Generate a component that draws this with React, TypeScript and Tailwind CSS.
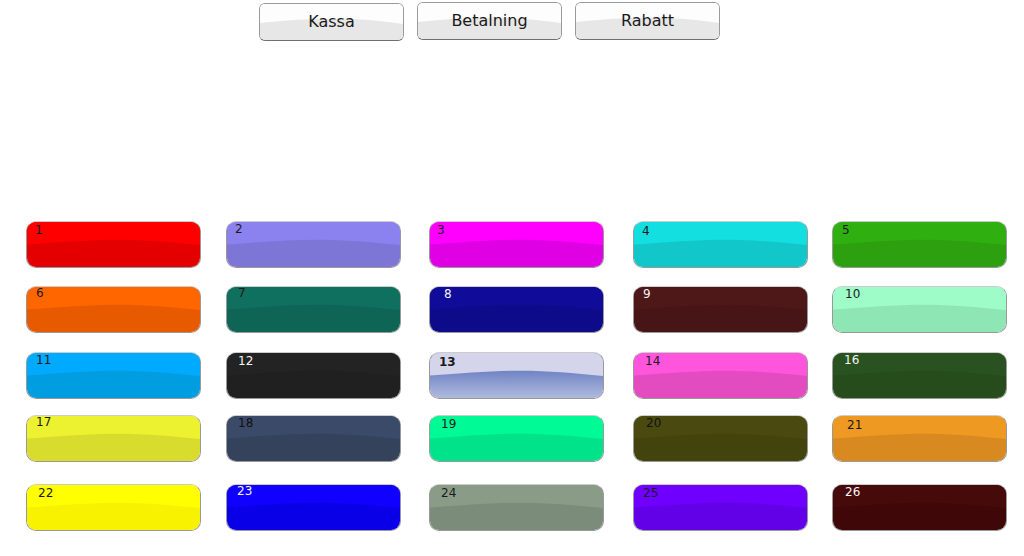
import React from "react";

type Cell = {
  n: string;
  top: string;
  bottom: string;
  text: string;
  pad: string;
  special?: boolean;
};

const rows: Cell[][] = [
  [
    { n: "1", top: "#ff0000", bottom: "#e50000", text: "text-[#1a1a1a]", pad: "pl-[8px] pt-[2px]" },
    { n: "2", top: "#8c82ef", bottom: "#7d76d6", text: "text-[#1a1a1a]", pad: "pl-[8px] pt-[1px]" },
    { n: "3", top: "#ff00ff", bottom: "#e000e4", text: "text-[#1a1a1a]", pad: "pl-[7px] pt-[2px]" },
    { n: "4", top: "#14dfe0", bottom: "#12c7c9", text: "text-[#1a1a1a]", pad: "pl-[8px] pt-[3px]" },
    { n: "5", top: "#30b010", bottom: "#2ca00e", text: "text-[#1a1a1a]", pad: "pl-[9px] pt-[2px]" },
  ],
  [
    { n: "6", top: "#ff6600", bottom: "#e85a00", text: "text-[#1a1a1a]", pad: "pl-[9px] pt-0" },
    { n: "7", top: "#0f7060", bottom: "#0e6556", text: "text-[#1a1a1a]", pad: "pl-[11px] pt-0" },
    { n: "8", top: "#100c99", bottom: "#0e0b8a", text: "text-[#f4f4f4]", pad: "pl-[14px] pt-[1px]" },
    { n: "9", top: "#4f1818", bottom: "#471515", text: "text-[#f4f4f4]", pad: "pl-[9px] pt-[1px]" },
    { n: "10", top: "#9efcc8", bottom: "#8ee6b4", text: "text-[#1a1a1a]", pad: "pl-[12px] pt-[1px]" },
  ],
  [
    { n: "11", top: "#00aaff", bottom: "#009ee0", text: "text-[#1a1a1a]", pad: "pl-[9px] pt-[1px]" },
    { n: "12", top: "#232323", bottom: "#202020", text: "text-[#f4f4f4]", pad: "pl-[11px] pt-[2px]" },
    { n: "13", top: "#d4d5ea", bottom: "#7084c4", text: "text-[#1a1a1a] font-bold", pad: "pl-[9px] pt-[3px]", special: true },
    { n: "14", top: "#ff55dd", bottom: "#e34bc0", text: "text-[#1a1a1a]", pad: "pl-[11px] pt-[2px]" },
    { n: "16", top: "#2a5220", bottom: "#274c1b", text: "text-[#f4f4f4]", pad: "pl-[11px] pt-[1px]" },
  ],
  [
    { n: "17", top: "#ecf230", bottom: "#d8dc2c", text: "text-[#1a1a1a]", pad: "pl-[9px] pt-0" },
    { n: "18", top: "#3a4a68", bottom: "#34425c", text: "text-[#111111]", pad: "pl-[11px] pt-[1px]" },
    { n: "19", top: "#00fa96", bottom: "#00e38a", text: "text-[#1a1a1a]", pad: "pl-[11px] pt-[2px]" },
    { n: "20", top: "#4a4a10", bottom: "#43430e", text: "text-[#111111]", pad: "pl-[12px] pt-[1px]" },
    { n: "21", top: "#ee9922", bottom: "#d88a20", text: "text-[#1a1a1a]", pad: "pl-[14px] pt-[3px]" },
  ],
  [
    { n: "22", top: "#ffff00", bottom: "#f8f200", text: "text-[#1a1a1a]", pad: "pl-[11px] pt-[2px]" },
    { n: "23", top: "#0f00ff", bottom: "#0a00e8", text: "text-[#f4f4f4]", pad: "pl-[10px] pt-0" },
    { n: "24", top: "#8a9c88", bottom: "#7c8c7a", text: "text-[#1a1a1a]", pad: "pl-[11px] pt-[2px]" },
    { n: "25", top: "#6f00ff", bottom: "#6200e8", text: "text-[#1a1a1a]", pad: "pl-[9px] pt-[2px]" },
    { n: "26", top: "#470a0a", bottom: "#3f0707", text: "text-[#f4f4f4]", pad: "pl-[12px] pt-[1px]" },
  ],
];

const colMargins = ["ml-[26px]", "ml-[25px]", "ml-[28px]", "ml-[29px]", "ml-[24px]"];
const rowMargins = ["mt-[180px]", "mt-[18px]", "mt-[19px]", "mt-[16px]", "mt-[22px]"];

function Wave({ top, bottom, special }: { top: string; bottom: string; special?: boolean }) {
  return (
    <svg
      className="absolute inset-0 h-full w-full"
      viewBox="0 0 175 47"
      preserveAspectRatio="none"
    >
      {special && (
        <defs>
          <linearGradient id="g13" x1="0" y1="0" x2="0" y2="1">
            <stop offset="0.35" stopColor="#6c80c2" />
            <stop offset="1" stopColor="#b0badf" />
          </linearGradient>
        </defs>
      )}
      <rect x="0" y="0" width="175" height="47" fill={special ? "url(#g13)" : bottom} />
      <path d="M0 0 H175 V24 C145 21 120 18.5 92 18.5 C62 18.5 35 21 0 23.5 Z" fill={top} />
    </svg>
  );
}

function ColorButton({ c, ml }: { c: Cell; ml: string }) {
  return (
    <div
      className={`${ml} relative h-[47px] w-[175px] shrink-0 overflow-hidden rounded-[10px] border border-black/40 border-t-black/20`}
    >
      <Wave top={c.top} bottom={c.bottom} special={c.special} />
      <div
        className={`relative ${c.pad} ${c.text} text-[12px] leading-[12px]`}
        style={{ fontFamily: '"DejaVu Sans", Verdana, sans-serif' }}
      >
        {c.n}
      </div>
    </div>
  );
}

function TopButton({ label, mt }: { label: string; mt: string }) {
  return (
    <div
      className={`${mt} relative flex h-[38px] w-[145px] shrink-0 items-center justify-center overflow-hidden rounded-[6px] border border-[#9a9a9a] border-b-[#6f6f6f]`}
    >
      <svg className="absolute inset-0 h-full w-full" viewBox="0 0 145 38" preserveAspectRatio="none">
        <rect x="0" y="0" width="145" height="38" fill="#e6e7e6" />
        <path d="M0 0 H145 V21 C120 17.5 100 15.5 75 15.5 C50 15.5 25 17 0 20 Z" fill="#fdfdfd" />
      </svg>
      <span
        className="relative text-[16px] text-[#1a1a1a]"
        style={{ fontFamily: '"DejaVu Sans", Verdana, sans-serif' }}
      >
        {label}
      </span>
    </div>
  );
}

export default function App() {
  return (
    <div className="h-[556px] w-[1024px] overflow-hidden bg-white">
      <div className="flex h-[41px] items-start">
        <div className="ml-[259px] flex items-start gap-[13px]">
          <TopButton label="Kassa" mt="mt-[3px]" />
          <TopButton label="Betalning" mt="mt-[2px]" />
          <TopButton label="Rabatt" mt="mt-[2px]" />
        </div>
      </div>
      {rows.map((row, ri) => (
        <div key={ri} className={`${rowMargins[ri]} flex`}>
          {row.map((c, ci) => (
            <ColorButton key={c.n} c={c} ml={colMargins[ci]} />
          ))}
        </div>
      ))}
    </div>
  );
}
